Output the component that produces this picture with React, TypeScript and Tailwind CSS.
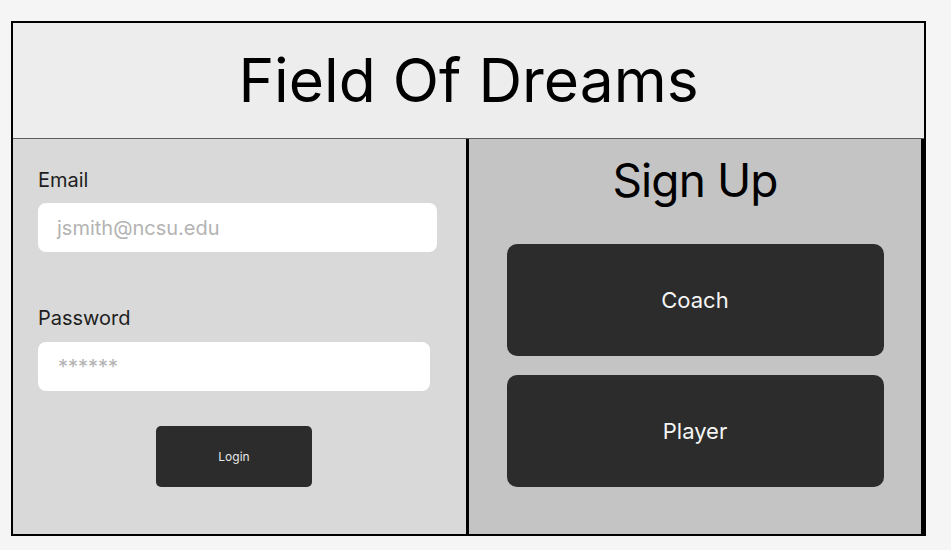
import React from 'react';

const App: React.FC = () => {
  return (
    <div className="w-full h-[550px] bg-[#f5f5f5] pt-[21px] pl-[11px] font-['Inter',sans-serif]">
      <div className="w-[915px] h-[515px] border-2 border-black flex flex-col">
        <header className="h-[116px] shrink-0 bg-[#ededed] border-b border-[#5c5c5c] flex items-center justify-center">
          <h1 className="text-[60.5px] leading-none text-black">Field Of Dreams</h1>
        </header>

        <div className="flex flex-1">
          {/* login */}
          <section className="w-[453px] bg-[#d9d9d9] pt-[31px] pl-[25px]">
            <label className="block text-[20px] leading-none text-[#1e1e1e]">Email</label>
            <div className="mt-[13px] w-[399px] h-[49px] bg-white rounded-lg flex items-center pl-[19px] text-[20px] text-[#b3b3b3]">
              jsmith@ncsu.edu
            </div>

            <label className="block mt-[56px] text-[20px] leading-none text-[#1e1e1e]">Password</label>
            <div className="mt-[14px] w-[392px] h-[49px] bg-white rounded-lg flex items-center pl-[20px] text-[20px] text-[#b3b3b3]">
              ******
            </div>

            <button className="mt-[35px] ml-[118px] w-[156px] h-[61px] bg-[#2c2c2c] rounded-[5px] text-[12px] text-[#e8e8e8]">
              Login
            </button>
          </section>

          {/* sign up */}
          <section className="w-[458px] bg-[#c4c4c4] border-l-[3px] border-r-[3px] border-black pt-[18px] flex flex-col items-center">
            <h2 className="text-[46px] leading-none tracking-[-0.02em] text-black">Sign Up</h2>
            <div className="mt-[41px] w-[377px] flex flex-col gap-[19px]">
              <button className="h-[112px] bg-[#2c2c2c] rounded-[10px] text-[22px] text-[#f5f5f5]">Coach</button>
              <button className="h-[112px] bg-[#2c2c2c] rounded-[10px] text-[22px] text-[#f5f5f5]">Player</button>
            </div>
          </section>
        </div>
      </div>
    </div>
  );
};

export default App;
